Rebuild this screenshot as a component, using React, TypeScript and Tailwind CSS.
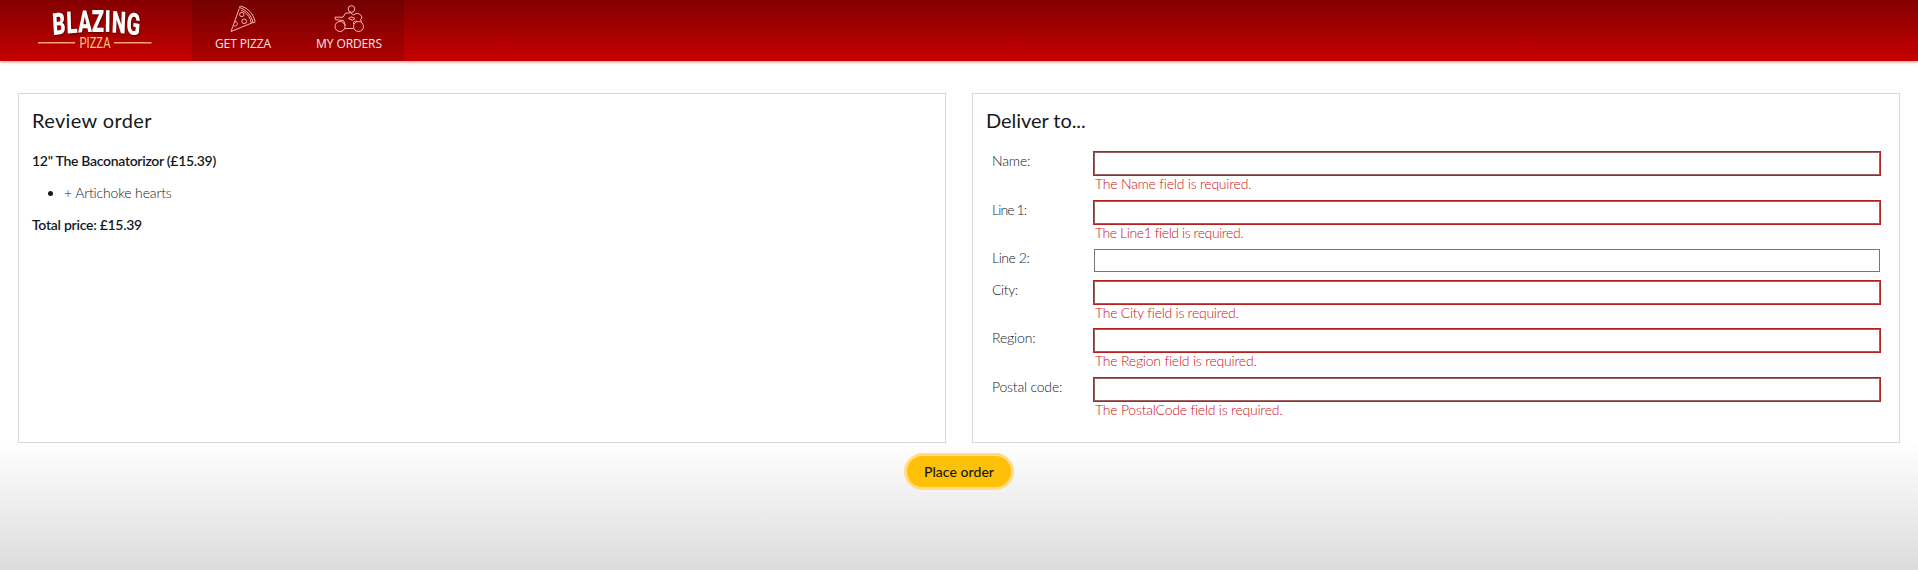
import React from "react";

type Field = { label: string; labelClass: string; error?: string; errorClass?: string; height: string };

const fields: Field[] = [
  { label: "Name:", labelClass: "tracking-[-0.15px]", error: "The Name field is required.", errorClass: "tracking-[-0.22px]", height: "h-[49px]" },
  { label: "Line 1:", labelClass: "tracking-[-0.9px]", error: "The Line1 field is required.", errorClass: "tracking-[-0.42px]", height: "h-12" },
  { label: "Line 2:", labelClass: "tracking-[-0.45px]", height: "h-8" },
  { label: "City:", labelClass: "tracking-[-0.4px]", error: "The City field is required.", errorClass: "tracking-[-0.26px]", height: "h-12" },
  { label: "Region:", labelClass: "tracking-[-0.15px]", error: "The Region field is required.", errorClass: "tracking-[-0.21px]", height: "h-[49px]" },
  { label: "Postal code:", labelClass: "tracking-[-0.2px]", error: "The PostalCode field is required.", errorClass: "tracking-[-0.22px]", height: "h-12" },
];

function Logo() {
  return (
    <svg width="192" height="61" viewBox="0 0 192 61" className="shrink-0">
      <g fontFamily="Roboto, sans-serif">
        <text
          transform="scale(0.66 1)"
          fontSize="30.500"
          fontWeight="900"
          fill="#fff"
          x="80.500 101.300 118.500 139 158.500 169 191"
          y="35.300 33.600 32.500 31.800 31.800 32.500 33.800"
          rotate="-5 -3 -2 0 1 3 5"
          style={{ filter: "drop-shadow(1px 1.5px 1px rgba(60,0,0,.7))" }}
        >
          BLAZING
        </text>
        <text x="79.500" y="47.700" fontSize="15" fontWeight="400" fill="#ffc880" textLength="31" lengthAdjust="spacingAndGlyphs">
          PIZZA
        </text>
      </g>
      <path d="M38 42.800H75M114 42.800H151.500" stroke="#ffa868" strokeWidth="1.600" />
    </svg>
  );
}

function PizzaIcon() {
  return (
    <svg width="28" height="28" viewBox="0 0 28 28" fill="none" stroke="#ffb4b4" strokeWidth="1" strokeLinejoin="round">
      <path d="M10.500 2.500C10 1.500 11 1 12.500 1.400C19 3 24.500 9 26 16.500C26.200 17.800 25 18.500 24 17.300C22.500 10.500 17 4.500 10.500 2.500Z" />
      <path d="M10.300 3.500L2 26.500L24 17.500M12 5.200C17 7 21.500 12 22.200 18" />
      <circle cx="12.800" cy="9.500" r="2.200" />
      <circle cx="15.200" cy="16.300" r="2.300" />
      <path d="M6 16.500A2.300 2.300 0 1 1 4.500 20.500" />
    </svg>
  );
}

function BikeIcon() {
  return (
    <svg width="32" height="28" viewBox="0 0 32 28" fill="none" stroke="#ffb4b4" strokeWidth="1" strokeLinejoin="round">
      <circle cx="18.500" cy="4" r="3.300" />
      <circle cx="7" cy="21.500" r="5" />
      <circle cx="25.500" cy="21.500" r="5" />
      <path d="M12 23.500H20.500M12.500 20.500L10.500 15.500L2.500 14.700L2 12.200H10L12.500 8.200L17.500 7.800L20.500 10L23 8.500C26 8 28.800 10 29 13L27.500 14.500L28.500 17" />
      <path d="M20.500 19C20 16.500 22 15.500 24.500 16.500" />
      <path d="M15.500 13.500L18 11.800L22 13.500L19.500 15.200Z" />
    </svg>
  );
}

export default function App() {
  return (
    <div className="flex h-[570px] w-full flex-col bg-[linear-gradient(to_bottom,#fff_0px,#fff_442px,#dcdcdc_570px)] font-['Lato',sans-serif] text-[14px] font-light text-[#16191c]">
      <header className="flex h-[61px] shrink-0 bg-[linear-gradient(to_bottom,#840000,#c60000)] shadow-[0_1px_3px_rgba(190,0,0,.5)]">
        <Logo />
        <nav className="flex bg-black/12 font-['Open_Sans',sans-serif] text-[12px] font-medium tracking-[-0.1px] text-[#ffe4e4]">
          <a className="flex w-[102px] flex-col items-center pt-[5px]">
            <PizzaIcon />
            <span className="mt-[2px] leading-[18px]">GET PIZZA</span>
          </a>
          <a className="flex w-[110px] flex-col items-center pt-[5px]">
            <BikeIcon />
            <span className="mt-[2px] leading-[18px]">MY ORDERS</span>
          </a>
        </nav>
      </header>

      <main className="mt-8 grid h-[350px] shrink-0 grid-cols-2 gap-[26px] px-[18px]">
        <section className="border border-[#d8d8d8] bg-white px-[13px] pt-[14px]">
          <h4 className="text-[20px] leading-6 font-normal tracking-[0.36px]">Review order</h4>
          <p className="mt-[19px] leading-5 font-semibold tracking-[-0.3px]">12" The Baconatorizor (£15.39)</p>
          <ul className="mt-3 list-disc pl-8 leading-5 tracking-[-0.15px]">
            <li>+ Artichoke hearts</li>
          </ul>
          <p className="mt-3 leading-5 font-semibold tracking-[-0.27px]">Total price: £15.39</p>
        </section>

        <section className="border border-[#d8d8d8] bg-white pt-[14px] pr-[19px] pl-[13px]">
          <h4 className="text-[20px] leading-6 font-normal tracking-[-0.05px]">Deliver to...</h4>
          <div className="mt-5 pl-[6px]">
            {fields.map((f) => (
              <div key={f.label} className={`flex ${f.height}`}>
                <label className={`-mt-px w-[102px] shrink-0 leading-5 ${f.labelClass}`}>{f.label}</label>
                <div className="flex-1">
                  <div
                    className={
                      f.error
                        ? "h-[23px] border border-[#a06060] bg-white outline outline-[#b32121]"
                        : "h-[23px] border border-[#767676] bg-white"
                    }
                  />
                  {f.error && <div className={`-mt-px pl-px leading-5 text-[#cc1020] ${f.errorClass}`}>{f.error}</div>}
                </div>
              </div>
            ))}
          </div>
        </section>
      </main>

      <div className="mt-[13px] flex justify-center">
        <button className="h-[31px] w-[104px] rounded-full bg-[#ffc107] pb-px font-medium tracking-[0.05px] shadow-[0_0_0_3px_#ffdc85]">
          Place order
        </button>
      </div>
    </div>
  );
}
